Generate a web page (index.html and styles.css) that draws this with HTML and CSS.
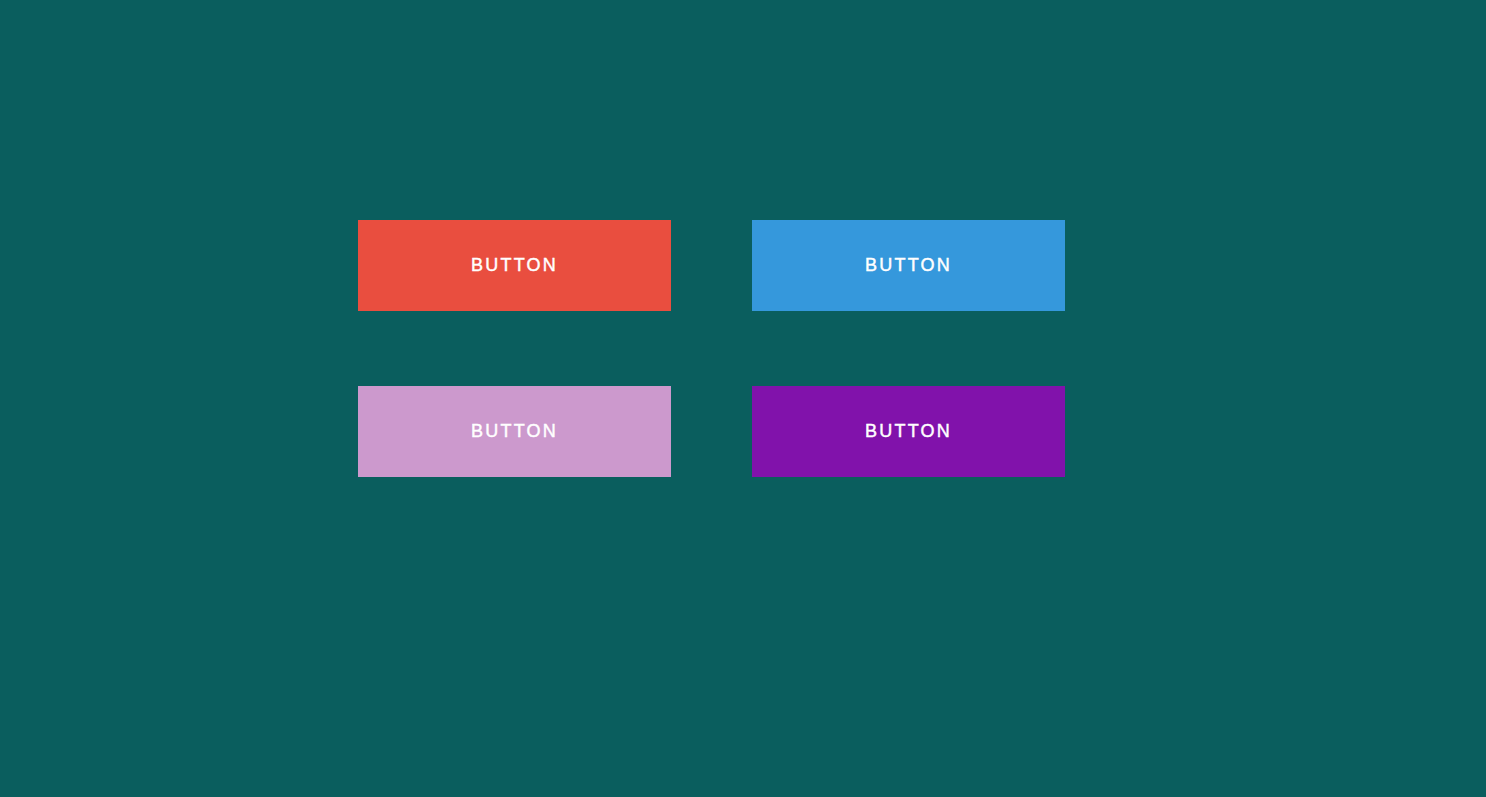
FILE: index.html
```html
<!DOCTYPE html>
<html>
<head>
<meta charset="utf-8">
<link rel="stylesheet" href="styles.css">
</head>
<body>
<div class="grid">
  <button class="btn red">BUTTON</button>
  <button class="btn blue">BUTTON</button>
  <button class="btn pink">BUTTON</button>
  <button class="btn purple">BUTTON</button>
</div>
</body>
</html>
```
FILE: styles.css
```css
html, body {
  margin: 0;
  height: 100%;
  background: #0a5e5e;
}
.grid {
  display: grid;
  grid-template-columns: 313px 313px;
  grid-auto-rows: 91px;
  column-gap: 81px;
  row-gap: 75px;
  padding: 220px 0 0 358px;
}
.btn {
  border: 0;
  margin: 0;
  padding: 0;
  color: #fff;
  font-family: "Liberation Sans", Arial, sans-serif;
  font-size: 18px;
  letter-spacing: 2.2px;
  font-weight: normal;
  -webkit-text-stroke: 0.45px #fff;
  cursor: pointer;
}
.red { background: #e94e3f; }
.blue { background: #3598dc; }
.pink { background: #cc99cd; }
.purple { background: #8112ab; }
```
